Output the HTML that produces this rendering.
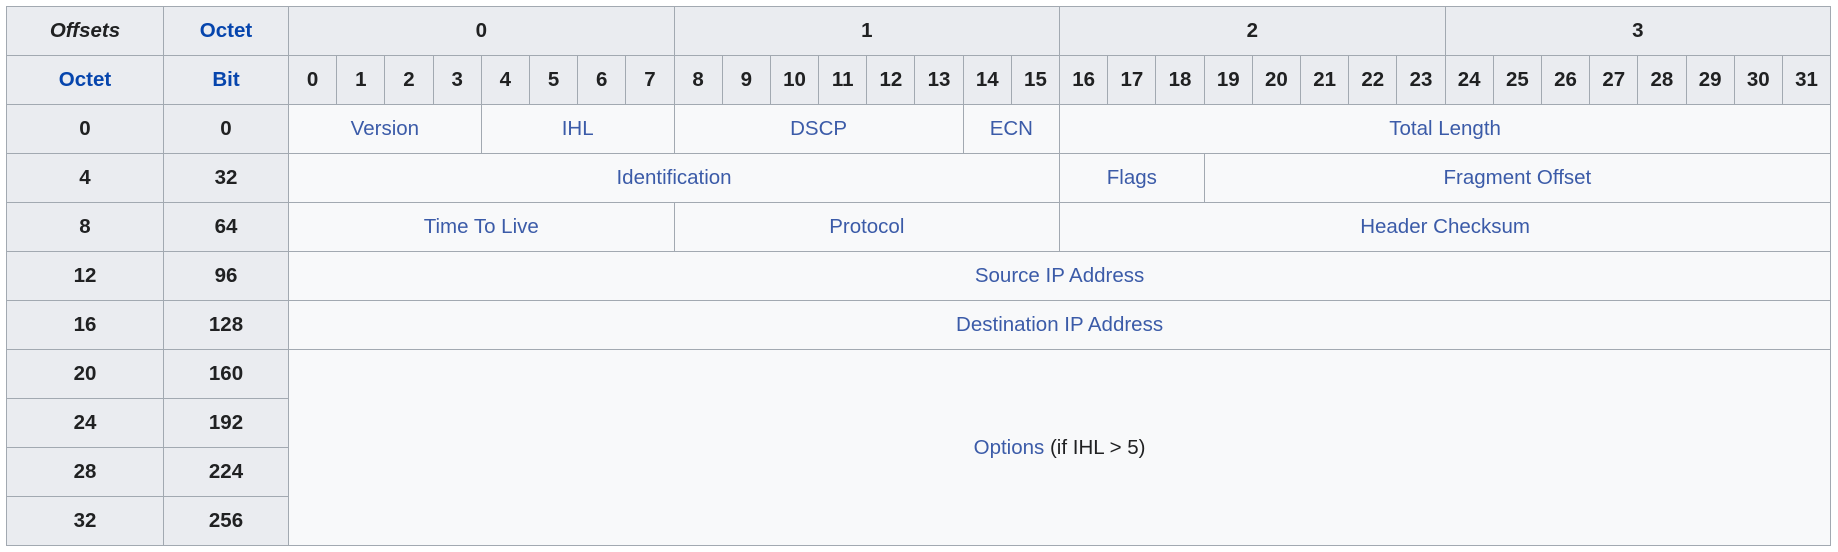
<!DOCTYPE html>
<html><head><meta charset="utf-8"><style>
html,body{margin:0;padding:0;background:#fff;width:1838px;height:552px;overflow:hidden}
table{position:absolute;left:6px;top:6px;border-collapse:collapse;table-layout:fixed;width:1824px;font-family:"Liberation Sans",Arial,sans-serif;font-size:20.5px;color:#202122}
td,th{border:1px solid #a2a9b1;height:48px;padding:0;text-align:center;vertical-align:middle;background:#f8f9fa}
th{background:#eaecf0;font-weight:bold}
.l{color:#0645ad}
td{color:#3b5ba8}
td .p{color:#202122}
</style></head><body>
<table>
<colgroup><col style="width:157px"><col style="width:125px">
<col span="32" style="width:48.19px"></colgroup>
<tr><th><i>Offsets</i></th><th class="l">Octet</th><th colspan="8">0</th><th colspan="8">1</th><th colspan="8">2</th><th colspan="8">3</th></tr>
<tr><th class="l">Octet</th><th class="l">Bit</th>
<th>0</th><th>1</th><th>2</th><th>3</th><th>4</th><th>5</th><th>6</th><th>7</th><th>8</th><th>9</th><th>10</th><th>11</th><th>12</th><th>13</th><th>14</th><th>15</th><th>16</th><th>17</th><th>18</th><th>19</th><th>20</th><th>21</th><th>22</th><th>23</th><th>24</th><th>25</th><th>26</th><th>27</th><th>28</th><th>29</th><th>30</th><th>31</th></tr>
<tr><th>0</th><th>0</th><td colspan="4">Version</td><td colspan="4">IHL</td><td colspan="6">DSCP</td><td colspan="2">ECN</td><td colspan="16">Total Length</td></tr>
<tr><th>4</th><th>32</th><td colspan="16">Identification</td><td colspan="3">Flags</td><td colspan="13">Fragment Offset</td></tr>
<tr><th>8</th><th>64</th><td colspan="8">Time To Live</td><td colspan="8">Protocol</td><td colspan="16">Header Checksum</td></tr>
<tr><th>12</th><th>96</th><td colspan="32">Source IP Address</td></tr>
<tr><th>16</th><th>128</th><td colspan="32">Destination IP Address</td></tr>
<tr><th>20</th><th>160</th><td colspan="32" rowspan="5">Options <span class="p">(if IHL &gt; 5)</span></td></tr>
<tr><th>24</th><th>192</th></tr>
<tr><th>28</th><th>224</th></tr>
<tr><th>32</th><th>256</th></tr>
</table>
</body></html>
